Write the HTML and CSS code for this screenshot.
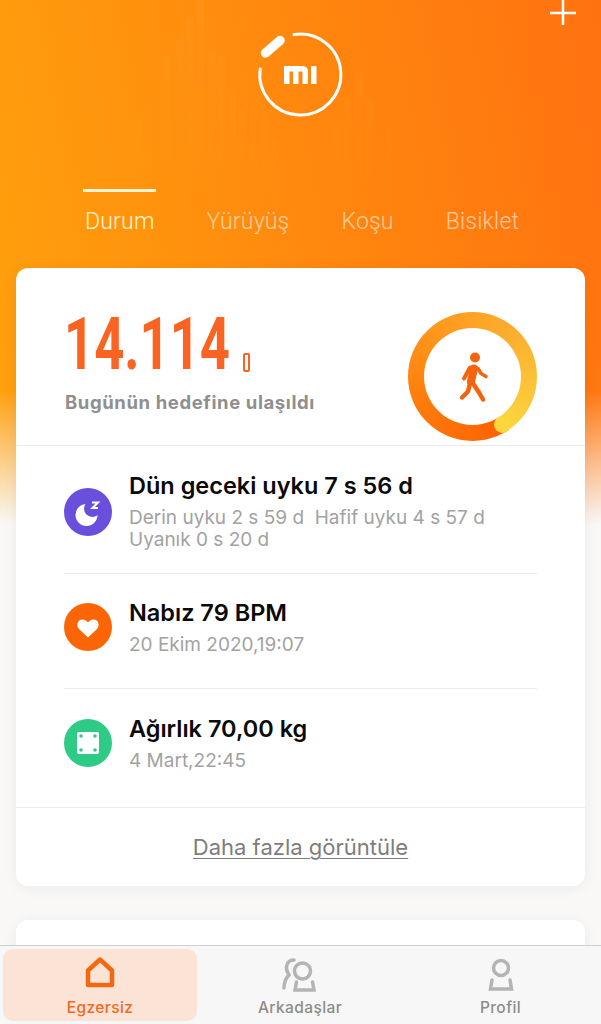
FILE: index.html
```html
<!DOCTYPE html>
<html lang="en">
<head>
  <meta charset="UTF-8" />
  <meta name="viewport" content="width=device-width, initial-scale=1.0" />
  <title>Egzersiz</title>
  <link rel="stylesheet" href="styles.css">
</head>
<body>
<div class="page">
  <div class="scroll">
    <!-- faint step bars behind the logo -->
    <svg class="bars" width="601" height="200" viewBox="0 0 601 200">
      <defs>
        <linearGradient id="barFade" gradientUnits="userSpaceOnUse" x1="0" y1="0" x2="0" y2="190">
          <stop offset="0" stop-color="#ffb347" stop-opacity="0.12"/>
          <stop offset="1" stop-color="#ffb347" stop-opacity="0"/>
        </linearGradient>
      </defs>
      <g fill="url(#barFade)">
        <rect x="135" y="122" width="7" height="68"/><rect x="145" y="108" width="7" height="82"/>
        <rect x="163" y="57" width="7" height="133"/><rect x="178" y="40" width="7" height="150"/>
        <rect x="187" y="17" width="7" height="173"/><rect x="197" y="0" width="7" height="190"/>
        <rect x="208" y="52" width="7" height="138"/><rect x="218" y="57" width="7" height="133"/>
        <rect x="229" y="95" width="7" height="95"/><rect x="239" y="108" width="7" height="82"/>
        <rect x="250" y="108" width="7" height="82"/><rect x="261" y="115" width="7" height="75"/>
        <rect x="271" y="140" width="7" height="50"/><rect x="334" y="130" width="7" height="60"/>
        <rect x="344" y="97" width="7" height="93"/><rect x="355" y="72" width="7" height="118"/>
        <rect x="366" y="102" width="7" height="88"/><rect x="386" y="127" width="7" height="63"/>
      </g>
    </svg>

    <header class="header">
      <div class="topbar">
        <svg width="26" height="26" viewBox="0 0 26 26"><path d="M13 0V25M0 13H26" stroke="#fff" stroke-width="2.5"/></svg>
      </div>
      <svg class="logo" width="90" height="90" viewBox="0 0 90 90">
        <path d="M38 4.500A40.500 40.500 0 1 1 4.200 39" fill="none" stroke="#fff" stroke-width="3" stroke-linecap="round"/>
        <path d="M9.500 23L24 10.500" stroke="#fff" stroke-width="9.500" stroke-linecap="round"/>
        <g fill="#fff">
          <path d="M28 36H46C50 36 52 38 52 42V54H46.500V42C46.500 41.500 46 41.500 45.500 41.500H28Z"/>
          <rect x="28" y="41" width="5.500" height="13"/>
          <rect x="37" y="41" width="5.500" height="13"/>
          <rect x="55" y="36" width="5.500" height="18"/>
        </g>
      </svg>
      <nav class="tabs">
        <div class="tab active">Durum</div>
        <div class="tab">Yürüyüş</div>
        <div class="tab">Koşu</div>
        <div class="tab">Bisiklet</div>
      </nav>
    </header>

    <section class="card">
      <div class="goal">
        <div class="goal-text">
          <div class="steps">
            <div class="steps-num"><span>14.114</span></div>
            <span class="band"></span>
          </div>
          <div class="goal-label">Bugünün hedefine ulaşıldı</div>
        </div>
        <div class="ring">
          <div class="ring-inner">
            <svg width="40" height="56" viewBox="-2 -1.500 40 56" fill="none" stroke="#f4640f" stroke-linecap="round" stroke-linejoin="round">
              <circle cx="20" cy="7" r="5" fill="#f4640f" stroke="none"/>
              <path d="M19 18L16 31" stroke-width="8"/>
              <path d="M15 17L9 28" stroke-width="4"/>
              <path d="M23 18L26 23L31 26" stroke-width="3.500"/>
              <path d="M15 33L13 41L7 47" stroke-width="4.500"/>
              <path d="M18 33L24 42L28 49" stroke-width="4.500"/>
            </svg>
          </div>
          <span class="ring-cap"></span>
        </div>
      </div>

      <div class="rows">
        <div class="row row-sleep">
          <svg class="row-icon" width="48" height="48" viewBox="0 0 48 48">
            <circle cx="24" cy="24" r="24" fill="#6a4fdc"/>
            <circle cx="22.500" cy="27" r="11" fill="#fff"/>
            <circle cx="28.500" cy="20.500" r="8.500" fill="#6a4fdc"/>
            <path d="M28 14.500H34L28.500 20H34" fill="none" stroke="#fff" stroke-width="2"/>
          </svg>
          <div class="row-text">
            <div class="row-title">Dün geceki uyku 7 s 56 d</div>
            <div class="row-sub">Derin uyku 2 s 59 d&nbsp; Hafif uyku 4 s 57 d<br>Uyanık 0 s 20 d</div>
          </div>
        </div>
        <div class="row row-pulse">
          <svg class="row-icon" width="48" height="48" viewBox="0 0 48 48">
            <circle cx="24" cy="24" r="24" fill="#fb6505"/>
            <path d="M24 34.500L15 26C12 23 13 16.500 18.500 16.500C21 16.500 23 18 24 19.500C25 18 27 16.500 29.500 16.500C35 16.500 36 23 33 26Z" fill="#fff"/>
          </svg>
          <div class="row-text">
            <div class="row-title">Nabız 79 BPM</div>
            <div class="row-sub">20 Ekim 2020,19:07</div>
          </div>
        </div>
        <div class="row row-weight">
          <svg class="row-icon" width="48" height="48" viewBox="0 0 48 48">
            <circle cx="24" cy="24" r="24" fill="#2ecb86"/>
            <rect x="13" y="13" width="22" height="22" rx="2" fill="#fff"/>
            <g fill="#2ecb86">
              <circle cx="17" cy="17" r="1.800"/><circle cx="31" cy="17" r="1.800"/>
              <circle cx="17" cy="31" r="1.800"/><circle cx="31" cy="31" r="1.800"/>
            </g>
          </svg>
          <div class="row-text">
            <div class="row-title">Ağırlık 70,00 kg</div>
            <div class="row-sub">4 Mart,22:45</div>
          </div>
        </div>
      </div>

      <div class="more"><a class="more-link">Daha fazla görüntüle</a></div>
    </section>

    <section class="card card-next"></section>
  </div>

  <nav class="bottom">
    <div class="bottom-item active">
      <svg width="40" height="40" viewBox="0 0 40 40"><path d="M20 7.500L8 18.500V33H32V18.500Z" fill="none" stroke="#f26a10" stroke-width="4.500" stroke-linejoin="round"/></svg>
      <span>Egzersiz</span>
    </div>
    <div class="bottom-item">
      <svg width="50" height="40" viewBox="-4 -2 50 40" fill="none" stroke="#b4b4b4" stroke-width="3.500" stroke-linecap="round">
        <circle cx="23.500" cy="17" r="8"/>
        <path d="M17.500 28L16 36H35L33.500 28"/>
        <path d="M15 6C8 6 5 13 10 21C7 24 5 28 5 34"/>
      </svg>
      <span>Arkadaşlar</span>
    </div>
    <div class="bottom-item">
      <svg width="40" height="40" viewBox="0 -3 40 40" fill="none" stroke="#b4b4b4" stroke-width="3.500" stroke-linecap="round">
        <circle cx="20" cy="13" r="7.500"/>
        <path d="M11 25L9.500 34H30.500L29 25"/>
      </svg>
      <span>Profil</span>
    </div>
  </nav>
</div>
</body>
</html>
```

FILE: styles.css
```css
:root {
  --orange: #f4640f;
  --line: #ececec;
  --muted: #a2a2a2;
  --bg: #f9f8f7;
}
* { box-sizing: border-box; }
body {
  margin: 0;
  font-family: "Inter", "Liberation Sans", sans-serif;
}
.page {
  display: flex;
  flex-direction: column;
  height: 100vh;
  overflow: hidden;
}
.scroll {
  position: relative;
  flex: 1;
  min-height: 0;
  overflow: hidden;
  padding: 0 16px;
  background:
    linear-gradient(to bottom, rgba(249,248,247,0) 390px, var(--bg) 525px),
    linear-gradient(80deg, #ffa60c 0%, #ff7210 100%);
}
.bars { position: absolute; left: 0; top: 0; }

/* Header */
.header {
  position: relative;
  display: flex;
  flex-direction: column;
  height: 268px;
}
.topbar {
  display: flex;
  justify-content: flex-end;
  height: 30px;
  padding-right: 9px;
}
.logo { align-self: center; margin-left: 1px; }
.tabs {
  display: flex;
  gap: 52px;
  margin-top: 69px;
  padding-left: 69px;
}
.tab {
  position: relative;
  padding-top: 19px;
  font-family: "Roboto", sans-serif;
  font-weight: 300;
  font-size: 23px;
  line-height: 28px;
  letter-spacing: .2px;
  color: rgba(255,255,255,.6);
}
.tab.active { color: #fff3d8; }
.tab.active::before {
  content: "";
  position: absolute;
  left: -2px;
  right: -2px;
  top: 0;
  height: 3px;
  background: #fff3d8;
}

/* Cards */
.card {
  background: #fff;
  border-radius: 12px;
  box-shadow: 0 2px 14px rgba(0,0,0,.06);
}
.card-next { height: 120px; margin-top: 34px; }
.goal {
  display: flex;
  justify-content: space-between;
  align-items: flex-start;
  height: 178px;
  padding: 44px 48px 0;
  border-bottom: 1px solid var(--line);
}
.steps { display: flex; align-items: flex-end; }
.steps-num { width: 179px; height: 66px; }
.steps-num span {
  display: inline-block;
  font-family: "Roboto", sans-serif;
  font-weight: 700;
  font-size: 72px;
  line-height: 66px;
  color: #fa6322;
  transform: scaleX(.73);
  transform-origin: left;
}
.band {
  width: 7px;
  height: 19px;
  margin-bottom: 6px;
  border: 2px solid #fa6322;
  border-radius: 2px;
  background: #fff;
}
.goal-label {
  margin-top: 13px;
  margin-left: 1px;
  font-size: 18.500px;
  font-weight: 700;
  letter-spacing: .6px;
  color: #8f8f8f;
}
.ring {
  position: relative;
  display: flex;
  align-items: center;
  justify-content: center;
  width: 129px;
  height: 129px;
  border-radius: 50%;
  background: conic-gradient(from 150deg, #ff6200 0%, #ff7a0c 25%, #ff9a1e 50%, #fbae2e 70%, #fcd63f 100%);
}
.ring-inner {
  display: flex;
  align-items: center;
  justify-content: center;
  width: 97px;
  height: 97px;
  border-radius: 50%;
  background: #fff;
}
.ring-cap {
  position: absolute;
  left: 86px;
  top: 104px;
  width: 17px;
  height: 17px;
  border-radius: 50%;
  background: #fcd63f;
}

/* Rows */
.rows { padding: 0 48px; }
.row {
  display: flex;
  align-items: center;
  gap: 17px;
  border-bottom: 1px solid var(--line);
}
.row:last-child { border-bottom: none; }
.row-sleep { height: 128px; padding-top: 4px; }
.row-pulse { height: 115px; padding-bottom: 8px; }
.row-weight { height: 118px; padding-bottom: 10px; }
.row-icon { flex: none; }
.row-title {
  font-size: 23.500px;
  font-weight: 600;
  line-height: 28px;
  color: #0a0a0a;
}
.row-sub {
  margin-top: 7px;
  font-size: 19px;
  line-height: 22px;
  color: var(--muted);
}
.more {
  display: flex;
  align-items: center;
  justify-content: center;
  height: 79px;
  border-top: 1px solid var(--line);
}
.more-link {
  font-size: 22px;
  color: #7d7d7d;
  text-decoration: underline;
  text-underline-offset: 3px;
  text-decoration-thickness: 1px;
}

/* Bottom nav */
.bottom {
  display: grid;
  grid-template-columns: 194px 206px 1fr;
  flex: none;
  height: 79px;
  padding: 3px;
  border-top: 1px solid #cfcfcf;
  background: #f7f7f7;
}
.bottom-item {
  display: flex;
  flex-direction: column;
  align-items: center;
  padding-top: 3px;
  border-radius: 10px;
  font-size: 15.500px;
  font-weight: 500;
  letter-spacing: .4px;
  color: #8c8c8c;
}
.bottom-item span { margin-top: 6px; }
.bottom-item.active { background: #fbe3d6; color: #ee6b1d; }
```
